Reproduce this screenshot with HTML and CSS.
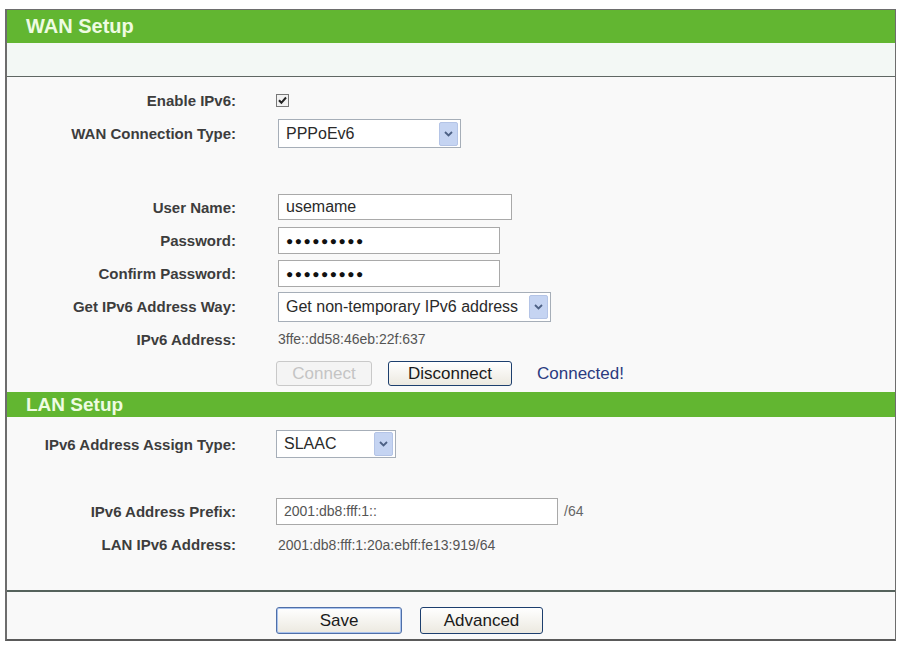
FILE: index.html
```html
<!DOCTYPE html>
<html lang="en">
<head>
    <meta charset="UTF-8">
    <title>IPv6 WAN / LAN Setup</title>
    <link rel="stylesheet" href="styles.css">
</head>
<body>
    <div class="panel">
        <div class="panel-head">WAN Setup</div>
        <div class="panel-strip"></div>

        <div class="form form-wan">
            <div class="row">
                <div class="label">Enable IPv6:</div>
                <div class="field">
                    <span class="check">
                        <svg width="9" height="9" viewBox="0 0 9 9"><path d="M1 4.2 L3.4 6.8 L8 1.5" fill="none" stroke="#222" stroke-width="2"/></svg>
                    </span>
                </div>
            </div>
            <div class="row row-33">
                <div class="label">WAN Connection Type:</div>
                <div class="field">
                    <span class="select select-wan">
                        <span class="select-text">PPPoEv6</span>
                        <span class="select-arrow"><svg width="9" height="6" viewBox="0 0 9 6"><path d="M1 1 L4.5 4.5 L8 1" fill="none" stroke="#4d6185" stroke-width="1.8"/></svg></span>
                    </span>
                </div>
            </div>
            <div class="spacer"></div>
            <div class="row">
                <div class="label">User Name:</div>
                <div class="field"><span class="input input-user">usemame</span></div>
            </div>
            <div class="row row-33">
                <div class="label">Password:</div>
                <div class="field"><span class="input input-pass">&#9679;&#9679;&#9679;&#9679;&#9679;&#9679;&#9679;&#9679;&#9679;</span></div>
            </div>
            <div class="row row-33">
                <div class="label">Confirm Password:</div>
                <div class="field"><span class="input input-pass">&#9679;&#9679;&#9679;&#9679;&#9679;&#9679;&#9679;&#9679;&#9679;</span></div>
            </div>
            <div class="row row-33">
                <div class="label">Get IPv6 Address Way:</div>
                <div class="field">
                    <span class="select select-way">
                        <span class="select-text">Get non-temporary IPv6 address</span>
                        <span class="select-arrow"><svg width="9" height="6" viewBox="0 0 9 6"><path d="M1 1 L4.5 4.5 L8 1" fill="none" stroke="#4d6185" stroke-width="1.8"/></svg></span>
                    </span>
                </div>
            </div>
            <div class="row row-short">
                <div class="label">IPv6 Address:</div>
                <div class="field"><span class="value">3ffe::dd58:46eb:22f:637</span></div>
            </div>
            <div class="row row-buttons">
                <div class="label"></div>
                <div class="field">
                    <button class="btn btn-connect" disabled>Connect</button>
                    <button class="btn btn-disconnect">Disconnect</button>
                    <span class="status">Connected!</span>
                </div>
            </div>
        </div>

        <div class="panel-head panel-head-lan">LAN Setup</div>

        <div class="form form-lan">
            <div class="row">
                <div class="label">IPv6 Address Assign Type:</div>
                <div class="field">
                    <span class="select select-assign">
                        <span class="select-text">SLAAC</span>
                        <span class="select-arrow"><svg width="9" height="6" viewBox="0 0 9 6"><path d="M1 1 L4.5 4.5 L8 1" fill="none" stroke="#4d6185" stroke-width="1.8"/></svg></span>
                    </span>
                </div>
            </div>
            <div class="spacer spacer-lan"></div>
            <div class="row">
                <div class="label">IPv6 Address Prefix:</div>
                <div class="field">
                    <span class="input input-prefix">2001:db8:fff:1::</span>
                    <span class="suffix">/64</span>
                </div>
            </div>
            <div class="row row-33">
                <div class="label">LAN IPv6 Address:</div>
                <div class="field"><span class="value">2001:db8:fff:1:20a:ebff:fe13:919/64</span></div>
            </div>
        </div>

        <div class="panel-foot">
            <div class="label"></div>
            <div class="field">
                <button class="btn btn-save">Save</button>
                <button class="btn btn-advanced">Advanced</button>
            </div>
        </div>
    </div>
</body>
</html>
```

FILE: styles.css
```css
body {
    margin: 0;
    padding: 9px 5px;
    background-color: #fff;
    font-family: "Liberation Sans", Arial, sans-serif;
}
.panel {
    width: 891px;
    box-sizing: border-box;
    border: 1px solid #6d6d6d;
    border-left: 2px solid #6d6d6d;
    border-bottom: 2px solid #5a5a5a;
    background-color: #f9f9f9;
}
.panel-head {
    height: 33px;
    line-height: 33px;
    padding-left: 19px;
    background-color: #62b631;
    color: #eefbe2;
    font-size: 20px;
    font-weight: bold;
}
.panel-head-lan {
    height: 25px;
    line-height: 25px;
    font-size: 19px;
}
.panel-strip {
    height: 33px;
    background-color: #f3f8f5;
    border-bottom: 1px solid #5f6763;
}
.form-wan {
    padding-top: 6px;
}
.form-lan {
    padding-top: 10px;
    padding-bottom: 29px;
    border-bottom: 2px solid #55625c;
}
.row,
.panel-foot {
    display: grid;
    grid-template-columns: 229px 1fr;
    column-gap: 40px;
    align-items: center;
    height: 34px;
}
.row-33 {
    height: 33px;
}
.row-short {
    height: 32px;
}
.row-buttons {
    height: 37px;
}
.spacer {
    height: 40px;
}
.spacer-lan {
    height: 33px;
}
.label {
    text-align: right;
    font-size: 15px;
    font-weight: bold;
    color: #3d3d3d;
}
.field {
    display: flex;
    align-items: center;
}
.check {
    display: inline-flex;
    align-items: center;
    justify-content: center;
    width: 11px;
    height: 11px;
    border: 1px solid #777;
    background-color: #f2f2f2;
}
.select {
    display: inline-flex;
    align-items: center;
    justify-content: space-between;
    box-sizing: border-box;
    margin-left: 2px;
    padding: 0 2px 0 7px;
    border: 1px solid #a6aeb8;
    background-color: #fff;
    color: #2a2a2a;
    font-size: 16px;
}
.select-wan {
    width: 183px;
    height: 29px;
}
.select-way {
    width: 273px;
    height: 30px;
}
.select-assign {
    width: 120px;
    height: 28px;
    margin-left: 0;
}
.select-arrow {
    display: inline-flex;
    align-items: center;
    justify-content: center;
    width: 17px;
    height: 22px;
    background-color: #c5d4f2;
    border: 1px solid #b4c4e6;
    border-radius: 2px;
}
.input {
    display: inline-flex;
    align-items: center;
    box-sizing: border-box;
    margin-left: 2px;
    padding-left: 7px;
    border: 1px solid #a9a9a9;
    background-color: #fff;
    color: #2a2a2a;
    font-size: 16px;
}
.input-user {
    width: 234px;
    height: 26px;
}
.input-pass {
    width: 222px;
    height: 27px;
    font-size: 12px;
    letter-spacing: 1.5px;
    color: #111;
}
.input-prefix {
    width: 282px;
    height: 27px;
    margin-left: 0;
    font-size: 14px;
    color: #555;
}
.suffix {
    margin-left: 6px;
    font-size: 14px;
    color: #666;
}
.value {
    margin-left: 2px;
    font-size: 14px;
    color: #555;
}
.btn {
    box-sizing: border-box;
    height: 25px;
    padding: 0;
    border: 1px solid #1d3f6e;
    border-radius: 3px;
    background: linear-gradient(#ffffff, #ece9e0);
    color: #1a1a1a;
    font-family: "Liberation Sans", Arial, sans-serif;
    font-size: 17px;
}
.btn-connect {
    width: 96px;
    border-color: #c9c9c9;
    background: #f4f4f4;
    color: #c4c4c4;
}
.btn-disconnect {
    width: 124px;
    margin-left: 16px;
}
.status {
    margin-left: 25px;
    font-size: 17px;
    color: #2b3b80;
}
.panel-foot {
    box-sizing: border-box;
    height: 47px;
    padding-top: 15px;
    align-items: start;
}
.btn-save {
    width: 126px;
    height: 27px;
    border-color: #4f6fa8;
    box-shadow: inset 0 0 0 1px #a9c3ee;
}
.btn-advanced {
    width: 123px;
    height: 27px;
    margin-left: 18px;
}
```
